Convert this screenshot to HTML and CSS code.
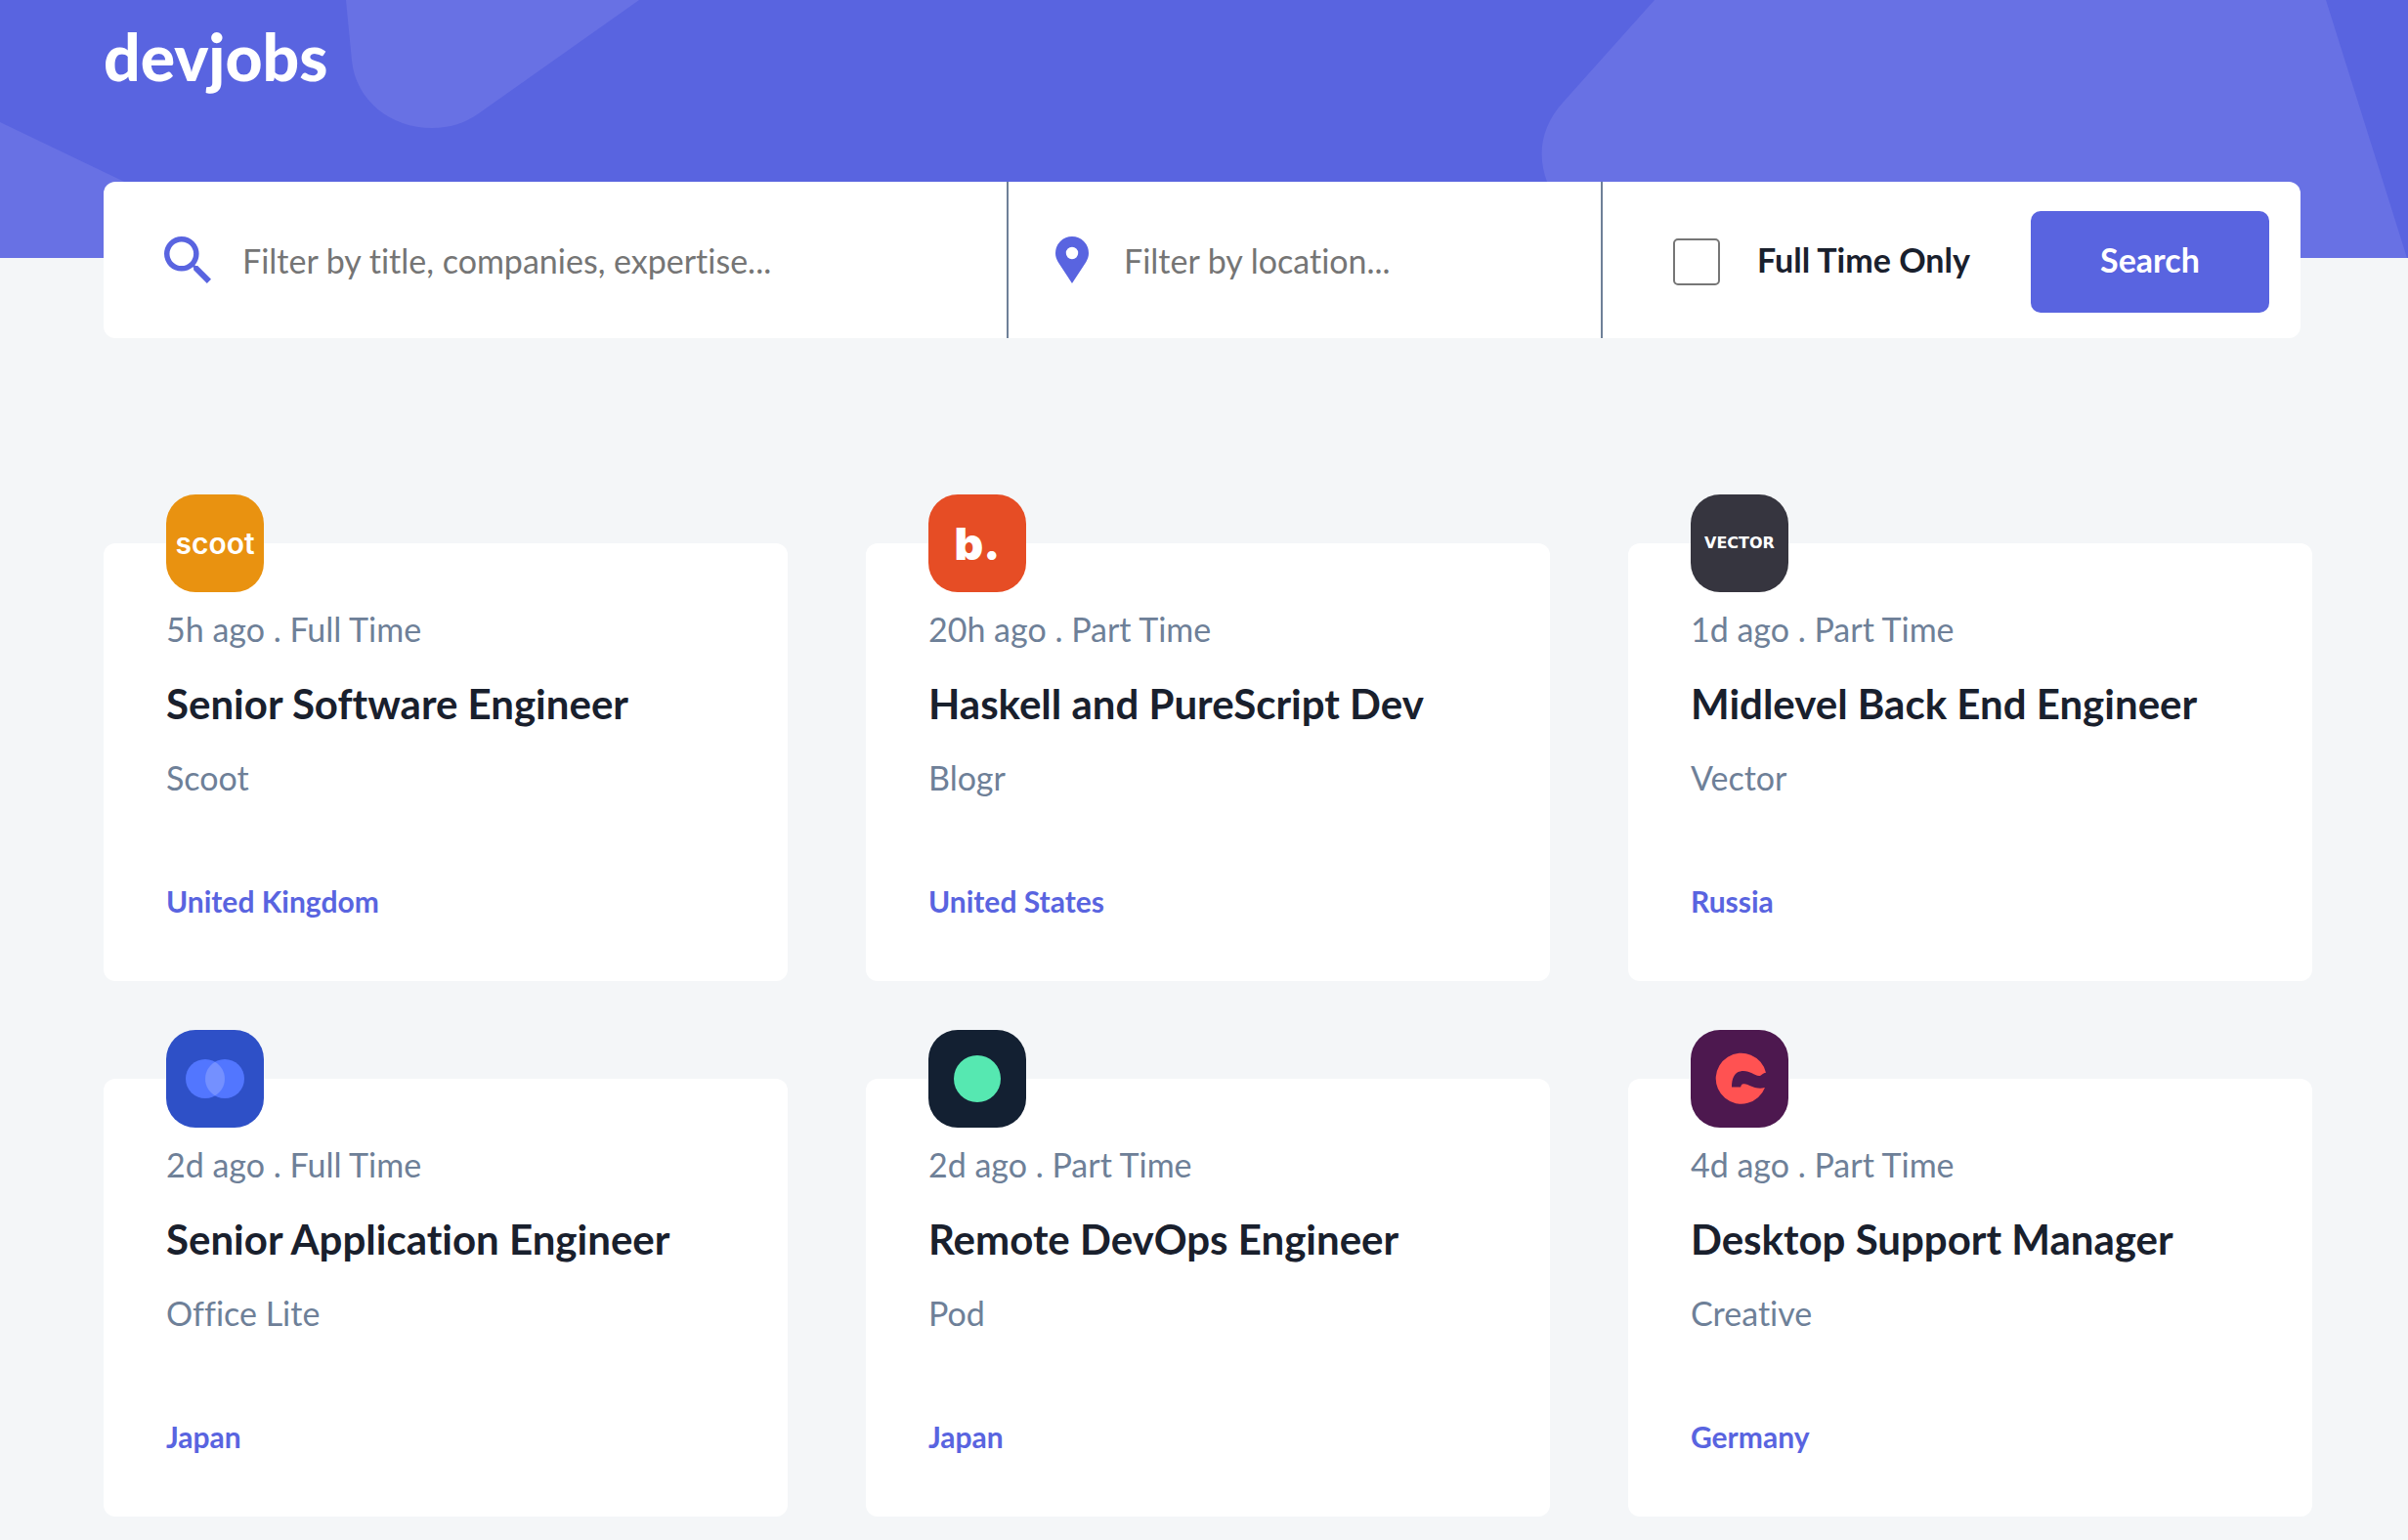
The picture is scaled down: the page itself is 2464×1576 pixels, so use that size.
FILE: index.html
```html
<!DOCTYPE html>
<html lang="en">
<head>
<meta charset="utf-8">
<meta name="viewport" content="width=device-width, initial-scale=1">
<title>devjobs</title>
<link rel="stylesheet" href="styles.css">
</head>
<body>
<header class="header">
  <svg class="header-pattern" viewBox="0 0 2464 264" preserveAspectRatio="none" aria-hidden="true">
    <path d="M0 125L290 264H0Z"/>
    <path d="M354 0L360 62C364 103 400 131 442 131C460 131 476 126 490 116L654 0Z"/>
    <path d="M1693 0L1600 104C1576 130 1573 160 1583 186L1620 264H2463L2380 0Z"/>
  </svg>
  <a class="logo" href="#">devjobs</a>
</header>
<main class="page">
  <form class="search">
    <div class="field">
      <svg class="icon-search" viewBox="0 0 24 24" aria-hidden="true"><path d="M17.112 15.059h-1.088l-.377-.377a8.814 8.814 0 002.15-5.784A8.898 8.898 0 108.898 17.797c2.211 0 4.23-.808 5.784-2.143l.377.377v1.081L21.904 24 24 21.911l-6.888-6.852zm-8.214 0A6.16 6.16 0 118.898 2.738a6.16 6.16 0 010 12.321z"/></svg>
      <input class="field-input" type="text" aria-label="Filter by title, companies, expertise" placeholder="Filter by title, companies, expertise...">
    </div>
    <div class="field field-location">
      <svg class="icon-pin" viewBox="0 0 17 24" aria-hidden="true"><path d="M8.5 0A8.5 8.5 0 000 8.500C0 10.200.5 11.500 1.300 13L8.500 24L15.700 13C16.500 11.500 17 10.200 17 8.500A8.500 8.500 0 008.500 0ZM8.500 11.600A3.100 3.100 0 118.500 5.400A3.100 3.100 0 018.500 11.600Z"/></svg>
      <input class="field-input" type="text" aria-label="Filter by location" placeholder="Filter by location...">
    </div>
    <div class="actions">
      <label class="full-time"><input class="checkbox" type="checkbox"><span class="full-time-text">Full Time Only</span></label>
      <button class="button" type="submit">Search</button>
    </div>
  </form>

  <section class="jobs" aria-label="Jobs">
    <article class="job">
      <div class="badge badge-scoot">scoot</div>
      <p class="meta">5h ago . Full Time</p>
      <h2 class="title">Senior Software Engineer</h2>
      <p class="company">Scoot</p>
      <p class="location">United Kingdom</p>
    </article>
    <article class="job">
      <div class="badge badge-blogr">b.</div>
      <p class="meta">20h ago . Part Time</p>
      <h2 class="title">Haskell and PureScript Dev</h2>
      <p class="company">Blogr</p>
      <p class="location">United States</p>
    </article>
    <article class="job">
      <div class="badge badge-vector">VECTOR</div>
      <p class="meta">1d ago . Part Time</p>
      <h2 class="title">Midlevel Back End Engineer</h2>
      <p class="company">Vector</p>
      <p class="location">Russia</p>
    </article>
    <article class="job">
      <div class="badge badge-office">
        <svg viewBox="0 0 100 100" aria-hidden="true"><circle cx="40" cy="50" r="20" fill="#5276ff"/><circle cx="60" cy="50" r="20" fill="#5276ff"/><path d="M50 32.700A20 20 0 0150 67.300A20 20 0 0150 32.700Z" fill="#7490ff"/></svg>
      </div>
      <p class="meta">2d ago . Full Time</p>
      <h2 class="title">Senior Application Engineer</h2>
      <p class="company">Office Lite</p>
      <p class="location">Japan</p>
    </article>
    <article class="job">
      <div class="badge badge-pod">
        <svg viewBox="0 0 100 100" aria-hidden="true"><circle cx="50" cy="50" r="24" fill="#56e8b1"/></svg>
      </div>
      <p class="meta">2d ago . Part Time</p>
      <h2 class="title">Remote DevOps Engineer</h2>
      <p class="company">Pod</p>
      <p class="location">Japan</p>
    </article>
    <article class="job">
      <div class="badge badge-creative">
        <svg viewBox="0 0 100 100" aria-hidden="true"><path d="M77 43.700A26 26 0 1076 59C71 60.500 67 59.500 63 58C58 56 56 54.500 53 55.500C51.500 56 51.500 58 51 58.500H42C42 48 46 42 54 42C61 42 65 46.500 70 47C73 47 73 44 77 43.700Z" fill="#ff5252"/></svg>
      </div>
      <p class="meta">4d ago . Part Time</p>
      <h2 class="title">Desktop Support Manager</h2>
      <p class="company">Creative</p>
      <p class="location">Germany</p>
    </article>
  </section>
</main>
</body>
</html>
```
FILE: styles.css
```css
* { box-sizing: border-box; }
body {
  margin: 0;
  background: #f4f6f8;
  color: #19202d;
  font-family: Lato, "Liberation Sans", sans-serif;
  font-size: 34px;
  font-variant-ligatures: none;
  line-height: 40px;
}
h2, p { margin: 0; }
.header {
  position: relative;
  height: 264px;
  padding: 18px 98px 0 106px;
  background: #5964e0;
}
.header-pattern {
  position: absolute;
  inset: 0;
  width: 100%;
  height: 100%;
  fill: #6871e4;
}
.logo {
  position: relative;
  color: #fff;
  font-size: 66px;
  font-weight: 900;
  line-height: 80px;
  text-decoration: none;
}
.page { padding: 0 98px 24px 106px; }
.search {
  position: relative;
  display: grid;
  grid-template-columns: 926fr 608fr 714fr;
  height: 160px;
  margin: -78px 12px 160px 0;
  border-radius: 12px;
  background: #fff;
}
.field {
  display: flex;
  align-items: center;
  gap: 32px;
  min-width: 0;
  padding: 0 24px 0 62px;
  border-right: 2px solid #6e8098;
}
.field-location { gap: 36px; padding-left: 48px; }
.field-input {
  flex: 1;
  min-width: 0;
  height: 80px;
  padding: 0;
  border: 0;
  background: none;
  color: #19202d;
  font: inherit;
}
.field-input::placeholder { color: #757575; opacity: 1; }
.icon-search { width: 48px; height: 48px; fill: #5964e0; }
.icon-pin { width: 34px; height: 48px; fill: #5964e0; }
.actions {
  display: flex;
  align-items: center;
  justify-content: space-between;
  padding: 4px 32px 0 72px;
}
.full-time {
  display: flex;
  align-items: center;
  gap: 38px;
  font-weight: 700;
  white-space: nowrap;
}
.full-time-text { padding-bottom: 4px; }
.checkbox {
  appearance: none;
  width: 48px;
  height: 48px;
  margin: 0;
  border: 2px solid #767676;
  border-radius: 5px;
  background: #fff;
}
.checkbox:checked { background: #5964e0; }
.button {
  width: 244px;
  height: 104px;
  padding: 0 0 4px;
  border: 0;
  border-radius: 10px;
  background: #5964e0;
  color: #fff;
  font: inherit;
  font-weight: 700;
}
.jobs {
  display: grid;
  grid-template-columns: repeat(3, 1fr);
  gap: 100px 80px;
  padding-top: 50px;
}
.job {
  min-width: 0;
  padding: 0 64px 64px;
  border-radius: 12px;
  background: #fff;
}
.badge {
  display: flex;
  align-items: center;
  justify-content: center;
  width: 100px;
  height: 100px;
  margin: -50px 0 18px;
  border-radius: 30px;
  color: #fff;
}
.badge svg { width: 100px; height: 100px; }
.badge-scoot { background: #e99210; font-family: Inter, sans-serif; font-size: 30px; font-weight: 600; }
.badge-blogr { background: #e64d25; font-family: Inter, sans-serif; font-size: 46px; font-weight: 900; }
.badge-vector { background: #36353f; font-family: "DejaVu Sans", sans-serif; font-size: 16px; font-weight: 700; }
.badge-office { background: #2e50c7; }
.badge-pod { background: #132032; }
.badge-creative { background: #4d184f; }
.meta, .company { color: #6e8098; }
.title {
  margin: 32px 0;
  font-size: 42px;
  font-weight: 700;
  line-height: 48px;
}
.location {
  margin-top: 88px;
  color: #5964e0;
  font-size: 30px;
  font-weight: 700;
  line-height: 36px;
}
```
